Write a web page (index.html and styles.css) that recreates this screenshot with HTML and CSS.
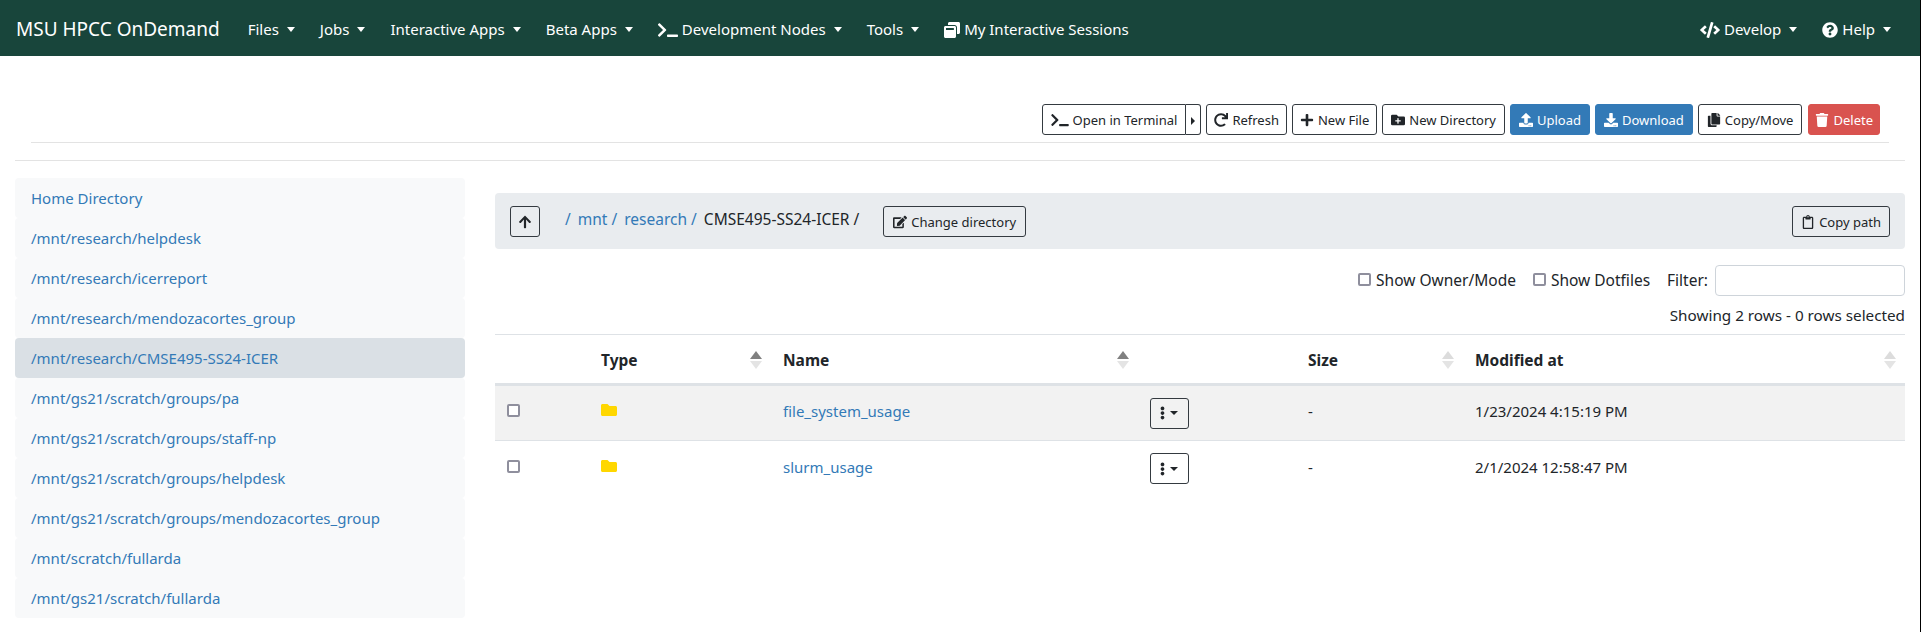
FILE: index.html
```html
<!DOCTYPE html>
<html lang="en">
<head>
	<meta charset="UTF-8">
	<title>Files - MSU HPCC OnDemand</title>
	<link rel="stylesheet" href="styles.css">
</head>
<body>
	<!-- navbar -->
	<nav class="navbar">
		<a class="brand">MSU HPCC OnDemand</a>
		<ul class="nav-list">
			<li class="caret-down">Files</li>
			<li class="caret-down">Jobs</li>
			<li class="caret-down">Interactive Apps</li>
			<li class="caret-down">Beta Apps</li>
			<li class="caret-down"><svg class="ico ico-nav-wide" viewBox="0 0 640 512"><path d="M257.981 272.971L63.638 467.314c-9.373 9.373-24.569 9.373-33.941 0L7.029 444.647c-9.357-9.357-9.375-24.522-.04-33.901L161.011 256 6.99 101.255c-9.335-9.379-9.317-24.544.04-33.901l22.667-22.667c9.373-9.373 24.569-9.373 33.941 0L257.98 239.03c9.373 9.372 9.373 24.568.001 33.941zM640 456v-32c0-13.255-10.745-24-24-24H312c-13.255 0-24 10.745-24 24v32c0 13.255 10.745 24 24 24h304c13.255 0 24-10.745 24-24z"/></svg>Development Nodes</li>
			<li class="caret-down">Tools</li>
			<li><svg class="ico ico-nav" viewBox="0 0 512 512"><path d="M512 48v288c0 26.5-21.5 48-48 48h-48V176c0-44.1-35.9-80-80-80H128V48c0-26.5 21.5-48 48-48h288c26.5 0 48 21.5 48 48zM384 176v288c0 26.5-21.5 48-48 48H48c-26.5 0-48-21.5-48-48V176c0-26.5 21.5-48 48-48h288c26.5 0 48 21.5 48 48zm-68 28c0-6.6-5.4-12-12-12H76c-6.6 0-12 5.4-12 12v52h252v-52z"/></svg>My Interactive Sessions</li>
		</ul>
		<ul class="nav-list nav-right">
			<li class="caret-down"><svg class="ico ico-nav-wide" viewBox="0 0 640 512"><path d="M278.9 511.5l-61-17.7c-6.4-1.8-10-8.5-8.2-14.9L346.2 8.7c1.8-6.4 8.5-10 14.9-8.2l61 17.7c6.4 1.8 10 8.5 8.2 14.9L293.8 503.3c-1.9 6.4-8.5 10.1-14.9 8.2zm-114-112.2l43.5-46.4c4.6-4.9 4.3-12.7-.8-17.2L117 256l90.6-79.7c5.1-4.5 5.5-12.3.8-17.2l-43.5-46.4c-4.5-4.8-12.1-5.1-17-.5L3.8 247.2c-5.1 4.7-5.1 12.8 0 17.5l144.1 135.1c4.9 4.6 12.5 4.4 17-.5zm327.2.6l144.1-135.1c5.1-4.7 5.1-12.8 0-17.5L492.1 112.1c-4.8-4.5-12.4-4.3-17 .5L431.6 159c-4.6 4.9-4.3 12.7.8 17.2L523 256l-90.6 79.7c-5.1 4.5-5.5 12.3-.8 17.2l43.5 46.4c4.5 4.9 12.1 5.1 17 .6z"/></svg>Develop</li>
			<li class="caret-down"><svg class="ico ico-nav" viewBox="0 0 512 512"><path d="M504 256c0 136.997-111.043 248-248 248S8 392.997 8 256C8 119.083 119.043 8 256 8s248 111.083 248 248zM262.655 90c-54.497 0-89.255 22.957-116.549 63.758-3.536 5.286-2.353 12.415 2.715 16.258l34.699 26.31c5.205 3.947 12.621 3.008 16.665-2.122 17.864-22.658 30.113-35.797 57.303-35.797 20.429 0 45.698 13.148 45.698 32.958 0 14.976-12.363 22.667-32.534 33.976C247.128 238.528 216 254.941 216 296v4c0 6.627 5.373 12 12 12h56c6.627 0 12-5.373 12-12v-1.333c0-28.462 83.186-29.647 83.186-106.667 0-58.002-60.165-102-116.531-102zM256 338c-25.365 0-46 20.635-46 46 0 25.364 20.635 46 46 46s46-20.636 46-46c0-25.365-20.635-46-46-46z"/></svg>Help</li>
		</ul>
	</nav>

	<!-- toolbar -->
	<div class="toolbar-wrap">
		<div class="toolbar">
			<div class="btn-group">
				<a class="btn btn-outline btn-main"><svg class="ico ico-term" viewBox="0 0 640 512"><path d="M257.981 272.971L63.638 467.314c-9.373 9.373-24.569 9.373-33.941 0L7.029 444.647c-9.357-9.357-9.375-24.522-.04-33.901L161.011 256 6.99 101.255c-9.335-9.379-9.317-24.544.04-33.901l22.667-22.667c9.373-9.373 24.569-9.373 33.941 0L257.98 239.03c9.373 9.372 9.373 24.568.001 33.941zM640 456v-32c0-13.255-10.745-24-24-24H312c-13.255 0-24 10.745-24 24v32c0 13.255 10.745 24 24 24h304c13.255 0 24-10.745 24-24z"/></svg>Open in Terminal</a><a class="btn btn-outline btn-split"><span class="caret-right"></span></a>
			</div>
			<a class="btn btn-outline btn-fit"><svg class="ico" viewBox="0 0 512 512"><path d="M500.33 0h-47.41a12 12 0 0 0-12 12.57l4 82.76A247.42 247.42 0 0 0 256 8C119.34 8 7.9 119.53 8 256.19 8.1 393.07 119.1 504 256 504a247.1 247.1 0 0 0 166.18-63.91 12 12 0 0 0 .48-17.43l-34-34a12 12 0 0 0-16.38-.55A176 176 0 1 1 402.1 157.8l-101.53-4.87a12 12 0 0 0-12.57 12v47.41a12 12 0 0 0 12 12h200.33a12 12 0 0 0 12-12V12a12 12 0 0 0-12-12z"/></svg>Refresh</a>
			<a class="btn btn-outline btn-fit"><svg class="ico ico-plus" viewBox="0 0 448 512"><path d="M416 208H272V64c0-17.67-14.33-32-32-32h-32c-17.67 0-32 14.33-32 32v144H32c-17.67 0-32 14.33-32 32v32c0 17.67 14.33 32 32 32h144v144c0 17.67 14.33 32 32 32h32c17.67 0 32-14.33 32-32V304h144c17.67 0 32-14.33 32-32v-32c0-17.67-14.33-32-32-32z"/></svg>New File</a>
			<a class="btn btn-outline"><svg class="ico" viewBox="0 0 512 512"><path d="M464,128H272L208,64H48A48,48,0,0,0,0,112V400a48,48,0,0,0,48,48H464a48,48,0,0,0,48-48V176A48,48,0,0,0,464,128ZM359.5,296a16,16,0,0,1-16,16h-64v64a16,16,0,0,1-16,16h-16a16,16,0,0,1-16-16V312h-64a16,16,0,0,1-16-16V280a16,16,0,0,1,16-16h64V200a16,16,0,0,1,16-16h16a16,16,0,0,1,16,16v64h64a16,16,0,0,1,16,16Z"/></svg>New Directory</a>
			<a class="btn btn-blue"><svg class="ico" viewBox="0 0 512 512"><path d="M296 384h-80c-13.3 0-24-10.7-24-24V192h-87.7c-17.8 0-26.7-21.5-14.1-34.1L242.3 5.7c7.5-7.5 19.8-7.5 27.3 0l152.2 152.2c12.6 12.6 3.7 34.1-14.1 34.1H320v168c0 13.3-10.7 24-24 24zm216-8v112c0 13.3-10.7 24-24 24H24c-13.3 0-24-10.7-24-24V376c0-13.3 10.7-24 24-24h136v8c0 30.9 25.1 56 56 56h80c30.9 0 56-25.1 56-56v-8h136c13.3 0 24 10.7 24 24zm-124 88c0-11-9-20-20-20s-20 9-20 20 9 20 20 20 20-9 20-20zm64 0c0-11-9-20-20-20s-20 9-20 20 9 20 20 20 20-9 20-20z"/></svg>Upload</a>
			<a class="btn btn-blue"><svg class="ico" viewBox="0 0 512 512"><path d="M216 0h80c13.3 0 24 10.7 24 24v168h87.7c17.8 0 26.7 21.5 14.1 34.1L269.7 378.3c-7.5 7.5-19.8 7.5-27.3 0L90.1 226.1c-12.6-12.6-3.7-34.1 14.1-34.1H192V24c0-13.3 10.7-24 24-24zm296 376v112c0 13.3-10.7 24-24 24H24c-13.3 0-24-10.7-24-24V376c0-13.3 10.7-24 24-24h146.7l49 49c20.1 20.1 52.5 20.1 72.6 0l49-49H488c13.3 0 24 10.7 24 24zm-124 88c0-11-9-20-20-20s-20 9-20 20 9 20 20 20 20-9 20-20zm64 0c0-11-9-20-20-20s-20 9-20 20 9 20 20 20 20-9 20-20z"/></svg>Download</a>
			<a class="btn btn-outline"><svg class="ico" viewBox="0 0 448 512"><path d="M320 448v40c0 13.255-10.745 24-24 24H24c-13.255 0-24-10.745-24-24V120c0-13.255 10.745-24 24-24h72v296c0 30.879 25.121 56 56 56h168zm0-344V0H152c-13.255 0-24 10.745-24 24v368c0 13.255 10.745 24 24 24h272c13.255 0 24-10.745 24-24V128H344c-13.2 0-24-10.8-24-24zm120.971-31.029L375.029 7.029A24 24 0 0 0 358.059 0H352v96h96v-6.059a24 24 0 0 0-7.029-16.97z"/></svg>Copy/Move</a>
			<a class="btn btn-red btn-fit-2"><svg class="ico" viewBox="0 0 448 512"><path d="M432 32H312l-9.4-18.7A24 24 0 0 0 281.1 0H166.8a23.72 23.72 0 0 0-21.4 13.3L136 32H16A16 16 0 0 0 0 48v32a16 16 0 0 0 16 16h416a16 16 0 0 0 16-16V48a16 16 0 0 0-16-16zM53.2 467a48 48 0 0 0 47.9 45h245.8a48 48 0 0 0 47.9-45L416 128H32z"/></svg>Delete</a>
		</div>
	</div>

	<div class="main">
		<!-- favorites list -->
		<ul class="side">
			<li>Home Directory</li>
			<li>/mnt/research/helpdesk</li>
			<li>/mnt/research/icerreport</li>
			<li>/mnt/research/mendozacortes_group</li>
			<li class="active">/mnt/research/CMSE495-SS24-ICER</li>
			<li>/mnt/gs21/scratch/groups/pa</li>
			<li>/mnt/gs21/scratch/groups/staff-np</li>
			<li>/mnt/gs21/scratch/groups/helpdesk</li>
			<li>/mnt/gs21/scratch/groups/mendozacortes_group</li>
			<li>/mnt/scratch/fullarda</li>
			<li>/mnt/gs21/scratch/fullarda</li>
		</ul>

		<div class="content">
			<div class="pathbar">
				<a class="btn btn-outline btn-up"><svg class="ico" viewBox="0 0 448 512"><path d="M34.9 289.5l-22.2-22.2c-9.4-9.4-9.4-24.6 0-33.9L207 39c9.4-9.4 24.6-9.4 33.9 0l194.3 194.3c9.4 9.4 9.4 24.6 0 33.9L413 289.4c-9.5 9.5-25 9.3-34.3-.4L264 168.6V456c0 13.3-10.7 24-24 24h-32c-13.3 0-24-10.7-24-24V168.6L69.2 289.1c-9.3 9.8-24.8 10-34.3.4z"/></svg></a>
				<div class="crumbs"><a>/</a><a>mnt /</a><a>research /</a><span>CMSE495-SS24-ICER /</span></div>
				<a class="btn btn-outline btn-change"><svg class="ico" viewBox="0 0 576 512"><path d="M402.6 83.2l90.2 90.2c3.8 3.8 3.8 10 0 13.8L274.4 405.6l-92.8 10.3c-12.4 1.4-22.9-9.1-21.5-21.5l10.3-92.8L388.8 83.2c3.8-3.8 10-3.8 13.8 0zm162-22.9l-48.8-48.8c-15.2-15.2-39.9-15.2-55.2 0l-35.4 35.4c-3.8 3.8-3.8 10 0 13.8l90.2 90.2c3.8 3.8 10 3.8 13.8 0l35.4-35.4c15.2-15.3 15.2-40 0-55.2zM384 346.2V448H64V128h229.8c3.2 0 6.2-1.3 8.5-3.5l40-40c7.6-7.6 2.2-20.5-8.5-20.5H48C21.5 64 0 85.5 0 112v352c0 26.5 21.5 48 48 48h352c26.5 0 48-21.5 48-48V306.2c0-10.7-12.9-16-20.5-8.5l-40 40c-2.2 2.3-3.5 5.3-3.5 8.5z"/></svg>Change directory</a>
				<a class="btn btn-outline btn-copy"><svg class="ico" viewBox="0 0 384 512"><path d="M336 64h-80c0-35.3-28.7-64-64-64s-64 28.7-64 64H48C21.5 64 0 85.5 0 112v352c0 26.5 21.5 48 48 48h288c26.5 0 48-21.5 48-48V112c0-26.5-21.5-48-48-48zM192 40c13.3 0 24 10.7 24 24s-10.7 24-24 24-24-10.7-24-24 10.7-24 24-24zm144 418c0 3.3-2.7 6-6 6H54c-3.3 0-6-2.7-6-6V118c0-3.3 2.7-6 6-6h42v36c0 6.6 5.4 12 12 12h168c6.6 0 12-5.4 12-12v-36h42c3.3 0 6 2.7 6 6z"/></svg>Copy path</a>
			</div>

			<div class="filters">
				<label class="check-label"><span class="check"></span>Show Owner/Mode</label>
				<label class="check-label"><span class="check"></span>Show Dotfiles</label>
				<label class="filter-label">Filter:</label>
				<span class="filter-input"></span>
			</div>
			<div class="info">Showing 2 rows - 0 rows selected</div>

			<table class="files">
				<thead>
					<tr>
						<th class="col-check"></th>
						<th class="col-type">Type<span class="sort sort-on"></span></th>
						<th class="col-name">Name<span class="sort sort-on"></span></th>
						<th class="col-menu"></th>
						<th class="col-size">Size<span class="sort"></span></th>
						<th class="col-date">Modified at<span class="sort"></span></th>
					</tr>
				</thead>
				<tbody>
					<tr class="odd">
						<td><span class="check"></span></td>
						<td><svg class="folder" viewBox="0 0 512 512"><path d="M464 128H272l-64-64H48C21.49 64 0 85.49 0 112v288c0 26.51 21.49 48 48 48h416c26.51 0 48-21.49 48-48V176c0-26.51-21.49-48-48-48z"/></svg></td>
						<td><a class="link">file_system_usage</a></td>
						<td class="td-menu"><a class="btn btn-outline btn-menu"><svg class="ico ico-dots" viewBox="0 0 192 512"><path d="M96 184c39.8 0 72 32.2 72 72s-32.2 72-72 72-72-32.2-72-72 32.2-72 72-72zM24 80c0 39.8 32.2 72 72 72s72-32.2 72-72S135.8 8 96 8 24 40.2 24 80zm0 352c0 39.8 32.2 72 72 72s72-32.2 72-72-32.2-72-72-72-72 32.2-72 72z"/></svg><span class="caret-small"></span></a></td>
						<td>-</td>
						<td>1/23/2024 4:15:19 PM</td>
					</tr>
					<tr>
						<td><span class="check"></span></td>
						<td><svg class="folder" viewBox="0 0 512 512"><path d="M464 128H272l-64-64H48C21.49 64 0 85.49 0 112v288c0 26.51 21.49 48 48 48h416c26.51 0 48-21.49 48-48V176c0-26.51-21.49-48-48-48z"/></svg></td>
						<td><a class="link">slurm_usage</a></td>
						<td class="td-menu"><a class="btn btn-outline btn-menu"><svg class="ico ico-dots" viewBox="0 0 192 512"><path d="M96 184c39.8 0 72 32.2 72 72s-32.2 72-72 72-72-32.2-72-72 32.2-72 72-72zM24 80c0 39.8 32.2 72 72 72s72-32.2 72-72S135.8 8 96 8 24 40.2 24 80zm0 352c0 39.8 32.2 72 72 72s72-32.2 72-72-32.2-72-72-72-72 32.2-72 72z"/></svg><span class="caret-small"></span></a></td>
						<td>-</td>
						<td>2/1/2024 12:58:47 PM</td>
					</tr>
				</tbody>
			</table>
		</div>
	</div>
</body>
</html>
```

FILE: styles.css
```css
*{
	margin: 0;
	padding: 0;
	box-sizing: border-box;
}

html{
	background-color: #000;
}

body{
	width: 1920px;
	height: 632px;
	overflow: hidden;
	background-color: #fff;
	font-family: "Noto Sans", "Open Sans", sans-serif;
	font-size: 15px;
	color: #212529;
}

ul{
	list-style: none;
}

.ico{
	width: 14px;
	height: 14px;
	fill: currentColor;
	margin-right: 4px;
	vertical-align: -2px;
}

.ico-term{
	width: 18px;
}

.ico-nav{
	width: 16px;
	height: 16px;
	margin-right: 4px;
	vertical-align: -3px;
}

.ico-nav-wide{
	width: 20px;
	height: 16px;
	margin-right: 4px;
	vertical-align: -3px;
}

/* navbar */
.navbar{
	height: 56px;
	background-color: #18453b;
	color: #fff;
	display: flex;
	align-items: center;
	padding: 2px 16px 0;
}

.brand{
	font-size: 19px;
	margin-right: 20px;
}

.nav-list{
	display: flex;
	font-size: 15px;
}

.nav-list li{
	padding: 0 8px;
	margin-right: 9px;
}

.nav-list li:last-child{
	margin-right: 0;
}

.nav-right{
	margin-left: auto;
	margin-right: 5px;
}

.caret-down::after{
	content: "";
	display: inline-block;
	margin-left: 8px;
	vertical-align: 3px;
	border-top: 5px solid #fff;
	border-left: 4px solid transparent;
	border-right: 4px solid transparent;
}

/* toolbar */
.toolbar-wrap{
	margin: 0 15px;
	padding: 48px 0 17px;
	border-bottom: 1px solid #e3e3e3;
}

.toolbar{
	margin: 0 16px;
	padding: 0 9px 7px 16px;
	border-bottom: 1px solid #e3e3e3;
	display: flex;
	justify-content: flex-end;
	gap: 5px;
}

.btn{
	display: inline-block;
	height: 31px;
	line-height: 31px;
	padding: 0 8px;
	font-size: 13px;
	border: 1px solid #343a40;
	border-radius: 3px;
	color: #212529;
	white-space: nowrap;
}

/* 这几个按钮文字比原来的字体宽一点 */
.btn-fit{
	padding: 0 7px;
}

.btn-fit-2{
	padding: 0 6px;
	margin-left: 1px;
}

.btn-blue{
	background-color: #337ab7;
	border-color: #337ab7;
	color: #fff;
}

.btn-red{
	background-color: #d9534f;
	border-color: #d9534f;
	color: #fff;
}

.btn-group{
	display: flex;
}

.btn-main{
	border-radius: 3px 0 0 3px;
}

.btn-split{
	border-left: 0;
	border-radius: 0 3px 3px 0;
	padding: 0 5px;
}

.caret-right{
	display: inline-block;
	border-left: 4px solid #212529;
	border-top: 4px solid transparent;
	border-bottom: 4px solid transparent;
}

/* main */
.main{
	display: flex;
	margin: 17px 15px 0;
	gap: 30px;
}

.side{
	width: 450px;
	flex-shrink: 0;
}

.side li{
	height: 40px;
	line-height: 40px;
	padding-left: 16px;
	background-color: #f8f9fa;
	color: #337ab7;
	border-radius: 4px;
}

.side .active{
	background-color: #dae0e5;
}

.content{
	flex: 1;
	padding-top: 15px;
}

.pathbar{
	height: 56px;
	background-color: #e9ecef;
	border-radius: 4px;
	display: flex;
	align-items: center;
	padding: 0 15px;
}

.btn-up{
	padding: 0 7px;
}

.btn-up .ico{
	margin-right: 0;
}

.crumbs{
	margin: -4px 24px 0 25px;
	display: flex;
	gap: 7px;
	font-size: 15.5px;
}

.crumbs a{
	color: #337ab7;
}

.btn-change{
	padding: 0 9px;
}

.btn-copy{
	margin-left: auto;
}

.filters{
	display: flex;
	justify-content: flex-end;
	align-items: center;
	margin-top: 16px;
	font-size: 15.5px;
}

.check{
	display: inline-block;
	width: 13px;
	height: 13px;
	border: 2px solid #8f8f9d;
	border-radius: 2px;
	background-color: #fff;
}

.check-label{
	display: flex;
	align-items: center;
	gap: 5px;
	margin-right: 17px;
	margin-top: -2px;
}

.filter-label{
	margin-right: 7px;
	margin-top: -2px;
}

.filter-input{
	width: 190px;
	height: 31px;
	border: 1px solid #ced4da;
	border-radius: 4px;
}

.info{
	text-align: right;
	font-size: 15.25px;
	margin-top: 9px;
	height: 29px;
}

/* table */
.files{
	width: 100%;
	border-collapse: collapse;
	table-layout: fixed;
	font-size: 15px;
}

.files th{
	height: 50px;
	text-align: left;
	position: relative;
	border-top: 1px solid #dee2e6;
	border-bottom: 3px solid #dee2e6;
	padding: 1px 12px 0;
	font-size: 15.5px;
}

.files td{
	height: 56px;
	padding: 0 12px 4px;
	border-bottom: 1px solid #dee2e6;
}

.files .td-menu{
	padding-bottom: 0;
}

.files tbody tr:last-child td{
	border-bottom: 0;
}

.odd td{
	background-color: #f2f2f2;
}

.col-check{
	width: 94px;
}

.col-type{
	width: 182px;
}

.col-name{
	width: 367px;
}

.col-menu{
	width: 158px;
}

.col-size{
	width: 167px;
}

.link{
	color: #337ab7;
}

.folder{
	width: 16px;
	height: 16px;
	fill: #ffd700;
	vertical-align: -1px;
}

.btn-menu{
	padding: 0 9px;
	height: 31px;
	display: inline-flex;
	align-items: center;
	width: 39px;
}

.ico-dots{
	width: 5px;
	height: 14px;
	margin-right: 5px;
}

.caret-small{
	border-top: 4px solid #212529;
	border-left: 4px solid transparent;
	border-right: 4px solid transparent;
}

/* sort arrows in the table head */
.sort{
	position: absolute;
	right: 9px;
	top: 16px;
	width: 12px;
	height: 20px;
}

.sort::before,
.sort::after{
	content: "";
	position: absolute;
	left: 0;
	border-left: 6px solid transparent;
	border-right: 6px solid transparent;
}

.sort::before{
	top: 0;
	border-bottom: 8px solid #dcdcdc;
}

.sort::after{
	top: 10px;
	border-top: 8px solid #e4e4e4;
}

.sort-on::before{
	border-bottom-color: #808080;
}
```
